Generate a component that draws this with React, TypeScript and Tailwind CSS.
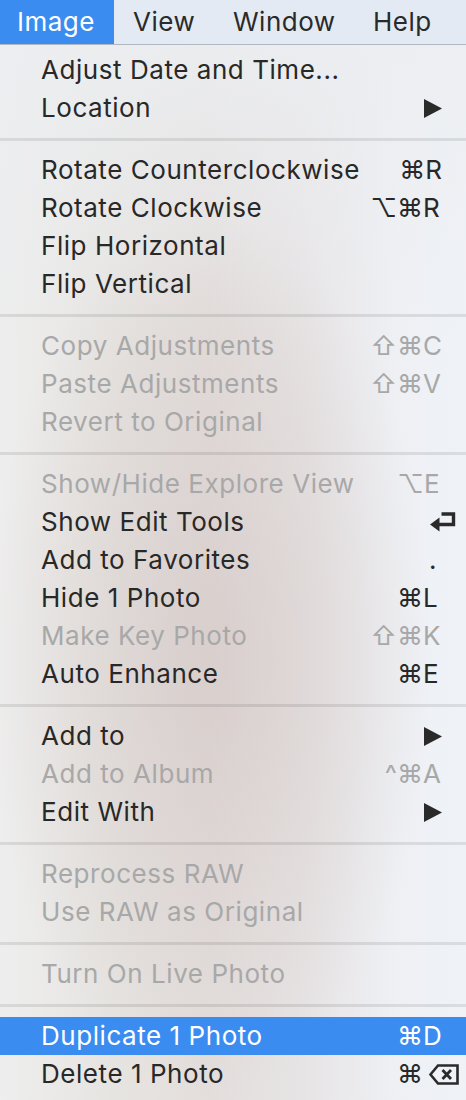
import React from 'react';

type Item = {
  label: string;
  mods?: string;
  keyChar?: string;
  icon?: 'sub' | 'return' | 'delete';
  disabled?: boolean;
  active?: boolean;
};

const groups: Item[][] = [
  [{ label: 'Adjust Date and Time...' }, { label: 'Location', icon: 'sub' }],
  [
    { label: 'Rotate Counterclockwise', mods: '⌘', keyChar: 'R' },
    { label: 'Rotate Clockwise', mods: '⌥⌘', keyChar: 'R' },
    { label: 'Flip Horizontal' },
    { label: 'Flip Vertical' },
  ],
  [
    { label: 'Copy Adjustments', mods: '⇧⌘', keyChar: 'C', disabled: true },
    { label: 'Paste Adjustments', mods: '⇧⌘', keyChar: 'V', disabled: true },
    { label: 'Revert to Original', disabled: true },
  ],
  [
    { label: 'Show/Hide Explore View', mods: '⌥', keyChar: 'E', disabled: true },
    { label: 'Show Edit Tools', icon: 'return' },
    { label: 'Add to Favorites', keyChar: '.' },
    { label: 'Hide 1 Photo', mods: '⌘', keyChar: 'L' },
    { label: 'Make Key Photo', mods: '⇧⌘', keyChar: 'K', disabled: true },
    { label: 'Auto Enhance', mods: '⌘', keyChar: 'E' },
  ],
  [
    { label: 'Add to', icon: 'sub' },
    { label: 'Add to Album', mods: '^⌘', keyChar: 'A', disabled: true },
    { label: 'Edit With', icon: 'sub' },
  ],
  [
    { label: 'Reprocess RAW', disabled: true },
    { label: 'Use RAW as Original', disabled: true },
  ],
  [{ label: 'Turn On Live Photo', disabled: true }],
  [
    { label: 'Duplicate 1 Photo', mods: '⌘', keyChar: 'D', active: true },
    { label: 'Delete 1 Photo', mods: '⌘', icon: 'delete' },
  ],
];

function SubArrow() {
  return (
    <svg width="18" height="19" viewBox="0 0 18 19" className="ml-[1px]">
      <path d="M0 0 L18 9.5 L0 19 Z" fill="#2a2a2a" />
    </svg>
  );
}

function ReturnIcon() {
  return (
    <svg width="26" height="20" viewBox="0 0 26 20" className="ml-[7px] -mt-[3px] shrink-0 overflow-visible">
      <path d="M11.5 3 H23.5 V13.5 H8" fill="none" stroke="#2a2a2a" strokeWidth="3.4" />
      <path d="M0 13.5 L9.5 6.5 L9.5 20.5 Z" fill="#2a2a2a" />
    </svg>
  );
}

function DeleteIcon() {
  return (
    <svg width="30" height="21" viewBox="0 0 30 21" className="ml-[6px] shrink-0 overflow-visible">
      <path d="M1.5 10.5 L9 1.5 H28.5 V19.5 H9 Z" fill="none" stroke="#2a2a2a" strokeWidth="2.6" strokeLinejoin="miter" />
      <path d="M13.5 6 L22 15 M22 6 L13.5 15" stroke="#2a2a2a" strokeWidth="2.8" />
    </svg>
  );
}

function Row({ item }: { item: Item }) {
  const color = item.active
    ? 'text-white bg-[#3b8cf0]'
    : item.disabled
      ? 'text-[#a8a8a8]'
      : 'text-[#282828]';
  return (
    <div className={`flex h-[38px] items-center pl-[41px] pr-[18px] ${color}`}>
      <span className="flex-1 whitespace-nowrap tracking-[0.55px]">{item.label}</span>
      <span className="w-[72px] text-right whitespace-nowrap">{item.mods ?? ''}</span>
      <span className="flex w-[25px] items-center whitespace-nowrap">
        {item.icon === 'sub' && <SubArrow />}
        {item.icon === 'return' && <ReturnIcon />}
        {item.icon === 'delete' && <DeleteIcon />}
        {item.keyChar === '.' ? <span className="ml-[6px]">.</span> : item.keyChar}
      </span>
    </div>
  );
}

export default function App() {
  return (
    <div className="w-[466px] h-[1100px] overflow-hidden font-['Inter','DejaVu_Sans',sans-serif] text-[26px] leading-[38px]">
      <div className="flex h-[45px] border-b border-[#b2b8c0] bg-[#e4eaf3] leading-[44px] tracking-[0.5px] text-[#2a2a2a]">
        <div className="w-[114px] bg-[#3b8cf0] pl-[17px] text-white">Image</div>
        <div className="w-[100px] pl-[19px]">View</div>
        <div className="w-[140px] pl-[19px]">Window</div>
        <div className="flex-1 pl-[19px]">Help</div>
      </div>
      <div className="h-[1055px] pt-[6px] bg-[radial-gradient(ellipse_48%_42%_at_45%_58%,rgba(214,203,201,0.8),rgba(214,203,201,0)),linear-gradient(to_bottom,rgba(236,238,241,0.9)_0px,rgba(236,238,241,0)_300px),linear-gradient(to_right,#eeeeee_0%,#e6e4e1_25%,#e3dedc_45%,#e7e4e5_65%,#eef0f4_85%,#eff2f7_100%)]">
        {groups.map((g, gi) => (
          <div key={gi}>
            {gi > 0 && (
              <div className="flex h-[24px] items-center">
                <div className="h-[3px] w-full bg-black/[0.09]" />
              </div>
            )}
            {g.map((it) => (
              <Row key={it.label} item={it} />
            ))}
          </div>
        ))}
      </div>
    </div>
  );
}
